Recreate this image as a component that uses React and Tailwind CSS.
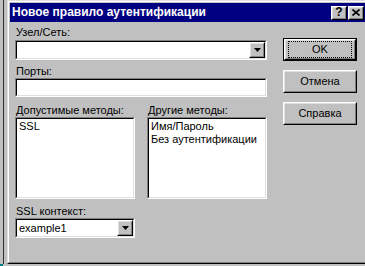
import React from 'react';

// Win95-style bevel: sunken field
const Sunken = ({ className = '', children }) => (
    <div className={`border-t border-l border-t-[#808080] border-l-[#808080] border-b border-r border-b-white border-r-white ${className}`}>
        <div className="h-full border-t border-l border-t-black border-l-black border-b border-r border-b-[#dfdfdf] border-r-[#dfdfdf] bg-white">
            {children}
        </div>
    </div>
);

// Win95-style bevel: raised button
const Raised = ({ className = '', children }) => (
    <div className={`border-t border-l border-t-white border-l-white border-b border-r border-b-black border-r-black bg-[#c0c0c0] ${className}`}>
        <div className="h-full border-t border-l border-t-[#dfdfdf] border-l-[#dfdfdf] border-b border-r border-b-[#808080] border-r-[#808080] flex items-center justify-center">
            {children}
        </div>
    </div>
);

const Arrow = () => (
    <svg width="7" height="4" viewBox="0 0 7 4" className="block">
        <path d="M0 0h7L3.5 4z" fill="#000" />
    </svg>
);

const Combo = ({ className = '', value = '' }) => (
    <Sunken className={className}>
        <div className="flex h-full">
            <span className="flex-1 pl-[2px] leading-[16px]">{value}</span>
            <Raised className="w-[16px] h-[16px]">
                <Arrow />
            </Raised>
        </div>
    </Sunken>
);

const Label = ({ className = '', children }) => (
    <div className={`pl-px h-[13px] leading-[13px] ${className}`}>{children}</div>
);

const Button = ({ children, isDefault = false }) => {
    if (isDefault) {
        return (
            <div className="h-[23px] border border-black">
                <Raised className="h-full">
                    <div className="w-full h-full m-[2px] border border-dotted border-black flex items-center justify-center">
                        {children}
                    </div>
                </Raised>
            </div>
        );
    }
    return <Raised className="h-[23px]">{children}</Raised>;
};

const TitleButton = ({ children }) => (
    <Raised className="w-[16px] h-[14px]">{children}</Raised>
);

export default function App() {
    return (
        <div className="w-[365px] h-[266px] bg-[#c0c0c0] flex flex-col overflow-hidden font-['Liberation_Sans',Arial,sans-serif] text-[11px] text-black">
            <div className="flex h-[264px]">
                {/* bord de la fenêtre derrière */}
                <div className="w-[3px]" />
                <div className="w-px bg-[#303030]" />
                <div className="w-[3px]" />

                {/* dialogue */}
                <div className="flex-1 flex flex-col border-t border-l border-b border-t-[#dfdfdf] border-l-[#dfdfdf] border-b-black">
                    <div className="flex-1 flex flex-col border-t border-l border-b border-t-white border-l-white border-b-[#808080] pt-px pl-px pb-px">
                        {/* barre de titre */}
                        <div className="h-[19px] bg-[#000080] flex items-center pl-[2px] pr-px">
                            <span className="flex-1 text-white font-bold text-[12px] leading-[19px]">Новое правило аутентификации</span>
                            <div className="flex gap-[1px] items-center">
                                <TitleButton>
                                    <span className="text-[12px] font-bold leading-[12px] -mt-px">?</span>
                                </TitleButton>
                                <TitleButton>
                                    <svg width="8" height="7" viewBox="0 0 8 7" className="block">
                                        <path d="M0.5 0.5L7.5 6.5M7.5 0.5L0.5 6.5" stroke="#000" strokeWidth="1.6" />
                                    </svg>
                                </TitleButton>
                            </div>
                        </div>

                        {/* contenu */}
                        <div className="flex-1 flex pl-[5px]">
                            <div className="w-[252px] flex flex-col pt-[4px]">
                                <Label>Узел/Сеть:</Label>
                                <Combo className="mt-px h-[20px]" />
                                <Label className="mt-[5px]">Порты:</Label>
                                <Sunken className="h-[19px]" />

                                <div className="mt-[7px] flex gap-[12px]">
                                    <div className="w-[120px]">
                                        <Label>Допустимые методы:</Label>
                                        <Sunken className="h-[82px]">
                                            <div className="pl-[2px] pt-px leading-[13px]">SSL</div>
                                        </Sunken>
                                    </div>
                                    <div className="w-[120px]">
                                        <Label>Другие методы:</Label>
                                        <Sunken className="h-[82px]">
                                            <div className="pl-[2px] pt-px leading-[13px]">
                                                <div>Имя/Пароль</div>
                                                <div>Без аутентификации</div>
                                            </div>
                                        </Sunken>
                                    </div>
                                </div>

                                <Label className="mt-[6px]">SSL контекст:</Label>
                                <Combo className="w-[120px] h-[20px]" value="example1" />
                            </div>

                            <div className="ml-[16px] pt-[16px] w-[74px] flex flex-col gap-[9px]">
                                <Button isDefault>OK</Button>
                                <Button>Отмена</Button>
                                <Button>Справка</Button>
                            </div>
                        </div>
                    </div>
                </div>
            </div>
            <div className="h-[2px] flex">
                <div className="w-[3px] bg-[#008080]" />
            </div>
        </div>
    );
}
